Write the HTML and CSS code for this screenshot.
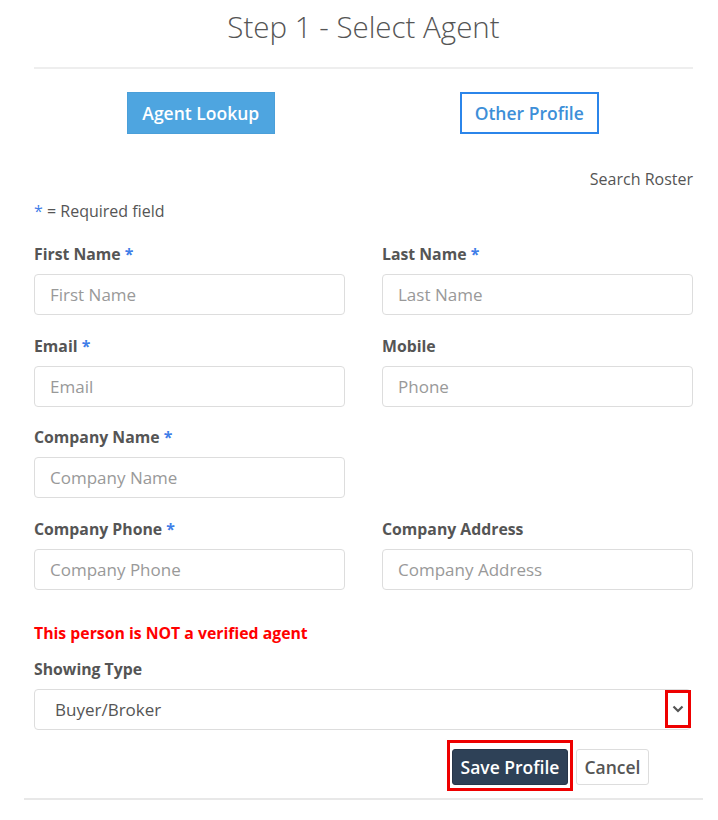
FILE: index.html
```html
<!DOCTYPE html>
<html>
<head>
<meta charset="utf-8">
<link rel="stylesheet" href="styles.css">
</head>
<body>
<div class="page">
  <h1 class="title">Step 1 - Select Agent</h1>
  <div class="inner">
    <div class="tabs">
      <div class="tab-cell"><button class="btn-tab active">Agent Lookup</button></div>
      <div class="tab-cell"><button class="btn-tab outline">Other Profile</button></div>
    </div>
    <div class="roster">Search Roster</div>
    <div class="required"><span class="star">*</span> = Required field</div>
    <div class="grid">
      <div class="field">
        <label>First Name <span class="star">*</span></label>
        <div class="input">First Name</div>
      </div>
      <div class="field">
        <label>Last Name <span class="star">*</span></label>
        <div class="input">Last Name</div>
      </div>
      <div class="field">
        <label>Email <span class="star">*</span></label>
        <div class="input">Email</div>
      </div>
      <div class="field">
        <label>Mobile</label>
        <div class="input">Phone</div>
      </div>
      <div class="field">
        <label>Company Name <span class="star">*</span></label>
        <div class="input">Company Name</div>
      </div>
      <div class="field"></div>
      <div class="field">
        <label>Company Phone <span class="star">*</span></label>
        <div class="input">Company Phone</div>
      </div>
      <div class="field">
        <label>Company Address</label>
        <div class="input">Company Address</div>
      </div>
    </div>
    <div class="warning">This person is NOT a verified agent</div>
    <div class="field">
      <label>Showing Type</label>
      <div class="select">
        <span class="select-value">Buyer/Broker</span>
        <span class="chev-box">
          <svg width="12" height="8" viewBox="0 0 12 8"><path d="M1.5 1.5 L6 6 L10.5 1.5" fill="none" stroke="#555" stroke-width="2.2"/></svg>
        </span>
      </div>
    </div>
    <div class="actions">
      <span class="highlight"><button class="btn-save">Save Profile</button></span>
      <button class="btn-cancel">Cancel</button>
    </div>
  </div>
  <div class="bottom-rule"></div>
</div>
</body>
</html>
```

FILE: styles.css
```css
* { box-sizing: border-box; }
body {
  margin: 0;
  background: #fff;
  font-family: "Open Sans", "Noto Sans", sans-serif;
  color: #555;
}
.page {
  width: 679px;
  margin-left: 24px;
}
.title {
  margin: 0;
  padding-top: 6px;
  font-weight: 300;
  font-size: 29.5px;
  line-height: 42px;
  text-align: center;
  color: #555;
}
.inner {
  margin: 0 10px;
  border-top: 2px solid #eee;
  margin-top: 19px;
}
.tabs {
  display: grid;
  grid-template-columns: 1fr 1fr;
  margin-top: 23px;
}
.tab-cell {
  display: flex;
  justify-content: center;
}
.btn-tab {
  font-family: inherit;
  font-size: 17.5px;
  font-weight: 600;
  height: 42px;
  padding: 0;
  white-space: nowrap;
  border-radius: 0;
  cursor: pointer;
}
.btn-tab.active {
  background: #4ea5e0;
  color: #fff;
  border: 1px solid #4a9fd9;
  width: 148px;
  margin-left: 4px;
}
.btn-tab.outline {
  background: #fff;
  color: #3d8fd8;
  border: 2px solid #2b85ea;
  width: 139px;
  margin-left: 2px;
}
.roster {
  text-align: right;
  font-size: 16px;
  margin-top: 34px;
  line-height: 22px;
}
.required {
  font-size: 16px;
  line-height: 22px;
  margin-top: 10px;
}
.star { color: #3f7ee8; }
.grid {
  display: grid;
  grid-template-columns: 311px 311px;
  column-gap: 37px;
  row-gap: 19.67px;
  margin-top: 21px;
}
.field label {
  display: block;
  font-size: 15.8px;
  font-weight: 700;
  line-height: 22px;
  margin-bottom: 9px;
}
.input {
  height: 41px;
  border: 1px solid #ddd;
  border-radius: 4px;
  padding: 0 15px;
  font-size: 17px;
  line-height: 39px;
  color: #999;
}
.warning {
  color: #ff0000;
  font-weight: 700;
  font-size: 15.8px;
  line-height: 22px;
  margin-top: 32px;
  margin-bottom: 14px;
}
.select {
  height: 41px;
  border: 1px solid #ddd;
  border-radius: 4px;
  display: flex;
  align-items: center;
  justify-content: space-between;
  padding-left: 20px;
  margin-right: 2px;
  position: relative;
}
.select-value {
  font-size: 17px;
  color: #555;
}
.chev-box {
  width: 26px;
  height: 38px;
  border: 3px solid #ee0000;
  display: flex;
  align-items: center;
  justify-content: center;
  margin-right: -1px;
}
.actions {
  display: flex;
  justify-content: flex-end;
  align-items: center;
  gap: 3px;
  margin-top: 10px;
  padding-right: 44px;
}
.highlight {
  border: 3px solid #ee0000;
  padding: 6px 2px 3px 2px;
  display: inline-flex;
}
.btn-save {
  font-family: inherit;
  background: #2e4157;
  color: #fff;
  font-size: 17.5px;
  font-weight: 600;
  height: 36px;
  width: 116px;
  border: 1px solid #26364a;
  border-radius: 3px;
  padding: 0;
  white-space: nowrap;
}
.btn-cancel {
  font-family: inherit;
  background: #fff;
  color: #555;
  font-size: 17.5px;
  font-weight: 600;
  height: 36px;
  width: 73px;
  border: 1px solid #ddd;
  border-radius: 3px;
  padding: 0;
  margin-top: 3px;
}
.bottom-rule {
  border-top: 2px solid #e8e8e8;
  margin-top: 7px;
}
```
